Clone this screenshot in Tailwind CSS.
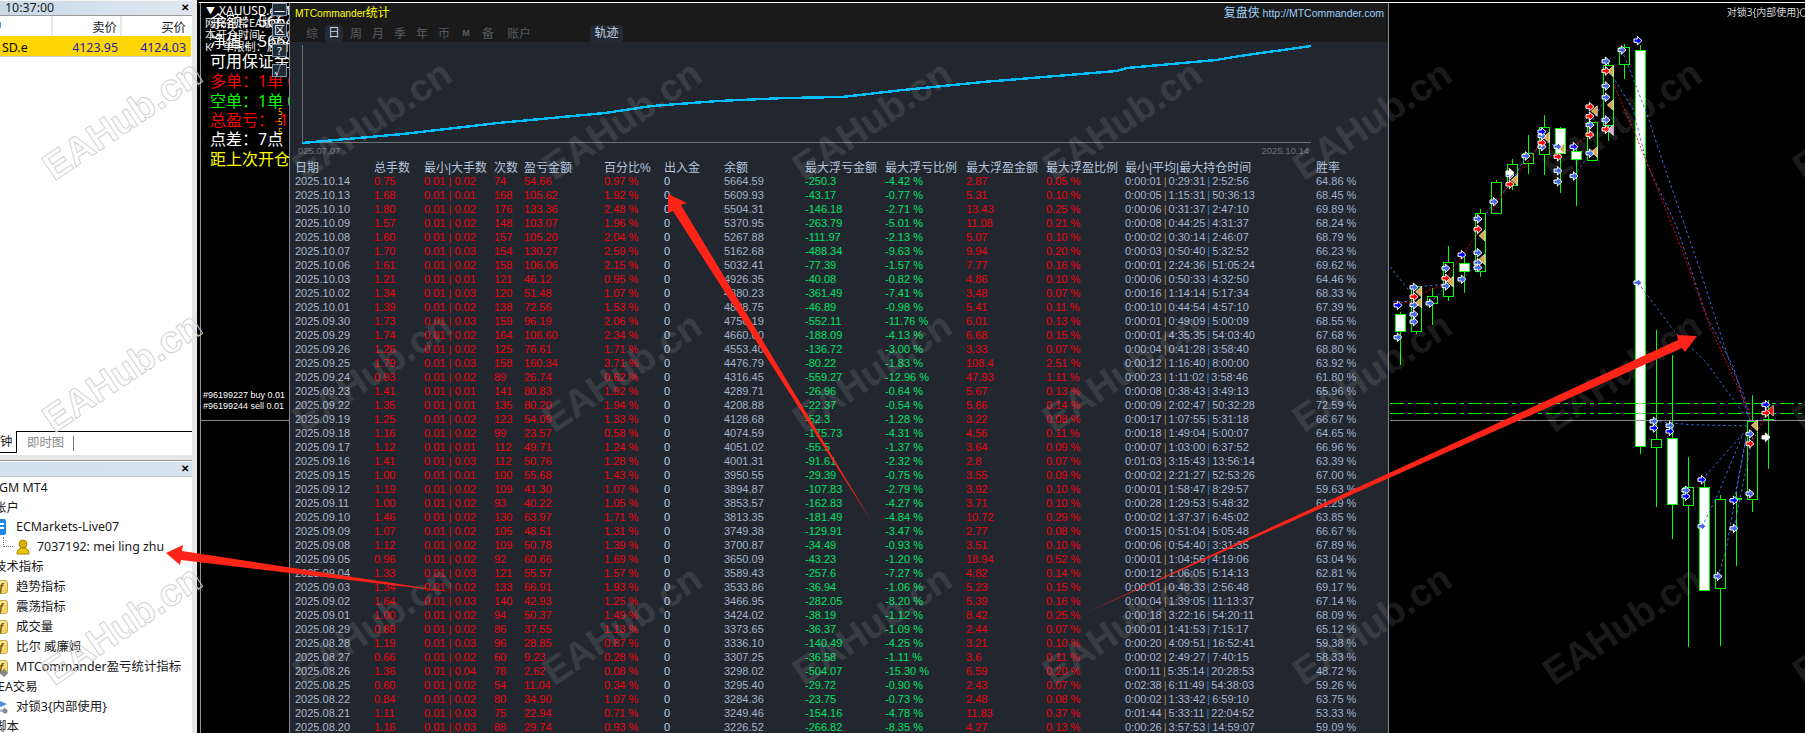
<!DOCTYPE html>
<html lang="en">
<head>
    <meta charset="UTF-8">
    <title>MTCommander</title>
    <script src="https://cdn.jsdelivr.net/npm/@tailwindcss/browser@4"></script>
</head>
<body class="bg-black">
<div id="page" class="relative flex w-[1805px] h-[733px] overflow-hidden bg-black text-[12.4px] [font-family:'Noto_Sans','Noto_Sans_CJK_SC',sans-serif]">

    <!-- left: market watch + navigator -->
    <div class="flex flex-col w-[192px] h-full bg-white text-[#1a1a1a] shrink-0">
        <div class="flex items-center justify-between h-[15px] pl-[5px] pr-[2px] bg-[#f4f4f4]">
            <div class="flex-1 h-[14px] -ml-[5px] pl-[5px] -mr-[14px] pr-[14px] bg-gradient-to-r from-[#c9d9e8] to-[#dfe8f0] leading-[14px]">10:37:00</div>
            <span class="relative font-bold text-[10px] leading-none text-black [font-family:'Liberation_Sans',sans-serif] pr-[1px]">✕</span>
        </div>
        <div class="flex h-[21px] border-t border-[#9a9a9a] leading-[24px]">
            <div class="relative w-[53px] border-r-2 border-[#e8e8e8]"><span class="absolute left-0 top-[6px] w-[1px] h-[6px] bg-[#3da5e8]"></span></div>
            <div class="w-[69px] border-r-2 border-[#e8e8e8] text-right pr-[3px]">卖价</div>
            <div class="w-[69px] text-right pr-[5px]">买价</div>
        </div>
        <div class="flex h-[21px] w-[191px] bg-[#ffd600] leading-[23px] border-b border-[#cfcfcf]">
            <div class="w-[53px] pl-[2px] text-black">SD.e</div>
            <div class="w-[69px] text-right pr-[4px] text-[#2222b8]">4123.95</div>
            <div class="w-[69px] text-right pr-[5px] text-[#2222b8]">4124.03</div>
        </div>
        <div class="flex-1"></div>
        <div class="flex h-[24px] border-t border-black">
            <div class="w-[17px] h-[22px] -mt-px bg-white border-r border-b border-black leading-[21px]">钟</div>
            <div class="w-[56px] h-[22px] pl-[10px] text-[#8a8a8a] leading-[21px]">即时图</div>
            <div class="w-px h-[15px] mt-[4px] bg-[#777]"></div>
        </div>
        <div class="h-[5px] bg-[#e6e6e6]"></div>
        <div class="flex items-center justify-between h-[16px] pr-[2px] border-t border-[#9a9a9a]">
            <div class="flex-1 h-[14px] -mr-[14px] bg-gradient-to-r from-[#d3e1ee] to-[#d7e3ee]"></div>
            <span class="relative font-bold text-[10px] leading-none text-black [font-family:'Liberation_Sans',sans-serif] pr-[1px]">✕</span>
        </div>
        <div class="flex-1 overflow-hidden pt-[1px] border-t border-[#c8c8c8] min-h-[257px] max-h-[257px]">
            <div class="h-[20px] leading-[20px] -ml-[1px]">GM MT4</div>
            <div class="h-[20px] leading-[20px] -ml-[6px]">账户</div>
            <div class="flex items-center h-[20px] -mt-[1px]">
                <svg class="w-[14px] h-[16px] -ml-[7px] mr-[9px]" viewBox="0 0 14 16"><rect x="1" y="0" width="12" height="16" rx="2" fill="#1e88e5"/><rect x="3" y="4" width="8" height="2" fill="#fff"/><rect x="3" y="8" width="8" height="2" fill="#fff"/></svg>
                <span>ECMarkets-Live07</span>
            </div>
            <div class="flex items-center h-[20px]">
                <div class="w-[10px] h-[10px] ml-[3px] -mt-[11px] border-l border-b border-dotted border-[#777]"></div>
                <svg class="w-[14px] h-[16px] ml-[3px] mr-[7px]" viewBox="0 0 14 16"><circle cx="7" cy="5" r="4" fill="#d9b200" stroke="#a88600"/><path d="M1 15c0-5 3-6 6-6s6 1 6 6z" fill="#e5c400" stroke="#a88600"/></svg>
                <span>7037192: mei ling zhu</span>
            </div>
            <div class="h-[20px] leading-[20px] -ml-[6px]">技术指标</div>
            <div class="flex items-center h-[20px]"><span class="w-[14px] h-[14px] -ml-[6px] mr-[8px] rounded-[3px] border border-[#c9a94a] bg-gradient-to-br from-[#fff7c2] to-[#f5c93a] text-center text-[10px] leading-[12px] italic font-bold text-[#7a5a00]">f</span><span>趋势指标</span></div>
            <div class="flex items-center h-[20px]"><span class="w-[14px] h-[14px] -ml-[6px] mr-[8px] rounded-[3px] border border-[#c9a94a] bg-gradient-to-br from-[#fff7c2] to-[#f5c93a] text-center text-[10px] leading-[12px] italic font-bold text-[#7a5a00]">f</span><span>震荡指标</span></div>
            <div class="flex items-center h-[20px]"><span class="w-[14px] h-[14px] -ml-[6px] mr-[8px] rounded-[3px] border border-[#c9a94a] bg-gradient-to-br from-[#fff7c2] to-[#f5c93a] text-center text-[10px] leading-[12px] italic font-bold text-[#7a5a00]">f</span><span>成交量</span></div>
            <div class="flex items-center h-[20px]"><span class="w-[14px] h-[14px] -ml-[6px] mr-[8px] rounded-[3px] border border-[#c9a94a] bg-gradient-to-br from-[#fff7c2] to-[#f5c93a] text-center text-[10px] leading-[12px] italic font-bold text-[#7a5a00]">f</span><span>比尔 威廉姆</span></div>
            <div class="flex items-center h-[20px]"><span class="relative w-[14px] h-[14px] -ml-[6px] mr-[8px] rounded-[3px] border border-[#c9a94a] bg-gradient-to-br from-[#fff7c2] to-[#f5c93a] text-center text-[10px] leading-[12px] italic font-bold text-[#7a5a00]">f<span class="absolute right-0 bottom-[-3px] w-[6px] h-[6px] rotate-45 bg-[#888]"></span></span><span>MTCommander盈亏统计指标</span></div>
            <div class="h-[20px] leading-[20px] -ml-[2px]">EA交易</div>
            <div class="flex items-center h-[20px]">
                <svg class="w-[14px] h-[16px] -ml-[6px] mr-[8px]" viewBox="0 0 14 16"><path d="M0 5l6-3 7 3-6 3z" fill="#4a8fd8"/><path d="M3 8c0 3 6 4 8 0v3c-2 3-7 2-8 0z" fill="#8fb8e0"/><circle cx="11" cy="12" r="2.5" fill="#888"/></svg>
                <span>对锁3{内部使用}</span>
            </div>
            <div class="h-[20px] leading-[20px] -ml-[6px]">脚本</div>
        </div>
    </div>
    <div class="w-[5px] h-full bg-[#e6e6e6] shrink-0"></div>

    <!-- right of the gutter -->
    <div class="flex flex-col flex-1 h-full">
        <div class="h-[2px] bg-black"></div>
        <div class="h-px ml-[2px] bg-white"></div>
        <div class="flex flex-1 min-h-0">

            <!-- small chart window with the EA's text panel -->
            <div class="relative w-[92px] h-full overflow-hidden border-l-[3px] border-l-black shrink-0 text-white">
                <div class="absolute left-0 top-0 w-px h-full bg-[#8a949c]"></div>
                <div class="absolute left-[6px] top-[1px] flex items-center gap-[4px] whitespace-nowrap leading-[14px] text-[12px]"><span class="text-[9px]">▼</span><span>XAUUSD.e,M</span></div>
                <div class="absolute left-[5px] top-[14px] whitespace-nowrap text-[11px] leading-[12px] flex flex-col text-[#e8e8e8]">
                    <span>网络正常EA版本</span><span>本开仓时间：20:00</span><span>K　单限制：启用</span>
                </div>
                <div class="absolute left-[10px] top-[8px] flex flex-col whitespace-nowrap text-[16px] leading-[20.2px]">
                    <div>余额：5664.59</div>
                    <div>净值：5664.39</div>
                    <div>可用保证金</div>
                    <div class="text-[#ff0000] -mt-px">多单：1单 0.01</div>
                    <div class="text-[#00ff00]">空单：1单 0.01</div>
                    <div class="text-[#ff0000] -mt-px">总盈亏：-1.50</div>
                    <div class="-mt-px">点差：7点</div>
                    <div class="text-[#ffff00]">距上次开仓</div>
                </div>
                <div class="absolute left-[72px] top-[0px] flex flex-col gap-[7px] text-[11px] leading-[12px] text-center text-white">
                    <div class="w-[15px] h-[13px] bg-[#1f2c3a] border border-[#8595a5]">—</div>
                    <div class="w-[15px] h-[14px] bg-[#1f2c3a] border border-[#8595a5]">区</div>
                    <div class="w-[15px] h-[13px] bg-[#1f2c3a] border border-[#8595a5]">?</div>
                    <div class="w-[15px] h-[13px] bg-[#1f2c3a] border border-[#8595a5]">√</div>
                </div>
                <div class="absolute left-[78px] top-[104px] flex flex-col text-[8px] leading-[10px] text-[#ffc800]"><span>5</span><span>5</span><span>5</span></div>
                <div class="absolute left-[3px] top-[387px] flex flex-col whitespace-nowrap text-[9px] leading-[11px] [font-family:'Liberation_Sans',sans-serif]">
                    <span>#96199227 buy 0.01</span><span>#96199244 sell 0.01</span>
                </div>
                <div class="absolute left-0 top-[417px] w-full h-px bg-[#8a8a8a]"></div>
            </div>

            <!-- stats window -->
            <div class="flex flex-col w-[1100px] h-full border-x border-[#7f8790] bg-[#22272f] shrink-0 [font-family:'Liberation_Sans','Noto_Sans_CJK_SC',sans-serif]">
                <div class="h-[40px] bg-[#1a1a1a]">
                    <div class="flex justify-between items-center h-[19px] pl-[5px] pr-[4px] pt-[1px]">
                        <span class="text-[#ffff00] text-[12px]"><span class="text-[10.2px]">MTCommander</span>统计</span>
                        <span class="text-[#9ed0fa] text-[10.5px]"><span class="text-[12px]">复盘侠</span> http://MTCommander.com</span>
                    </div>
                    <div class="flex items-center h-[20px] pt-[3px] pl-[11px] text-[12px] text-[#555b62]">
                        <span class="w-[22px] text-center">综</span>
                        <span class="w-[18px] h-[17px] mx-[2px] leading-[17px] rounded-[3px] bg-[#232a33] text-center text-[#c3d2e2]">日</span>
                        <span class="w-[22px] text-center">周</span>
                        <span class="w-[22px] text-center">月</span>
                        <span class="w-[22px] text-center">季</span>
                        <span class="w-[22px] text-center">年</span>
                        <span class="w-[22px] text-center">币</span>
                        <span class="w-[22px] text-center text-[9px] font-bold">M</span>
                        <span class="w-[22px] text-center">备</span>
                        <span class="w-[40px] text-center">账户</span>
                        <span class="w-[33px] h-[17px] ml-[51px] leading-[17px] rounded-[3px] bg-[#232a33] text-center text-[#c3d2e2]">轨迹</span>
                    </div>
                </div>
                <svg class="block w-[1098px] h-[118px] shrink-0" viewBox="290 43 1098 118">
                    <path d="M302.5 46V143.5H1311" fill="none" stroke="#6f7274"/>
                    <polyline fill="none" stroke="#00bfff" stroke-width="2.4" shape-rendering="crispEdges" points="302,144 403,135 498,124 605,114 652,107 718,102 785,99 842,98 903,91 983,83 1117,72 1127,69 1216,61 1240,57 1311,47"/>
                    <text x="298" y="155" font-size="9.5" fill="#6c7278">025.07.07</text>
                    <text x="1309" y="155" text-anchor="end" font-size="9.5" fill="#6c7278">2025.10.14</text>
                </svg>
                <div id="stats" class="pl-[5px] text-[11px] leading-[14px] whitespace-nowrap">
                    <div class="grid h-[14px] pt-px grid-cols-[79px_50px_70px_30px_80px_60px_60px_81px_80px_81px_80px_79px_191px_1fr] text-[12px] text-[#b3c4dc] leading-[14px]">
                        <div>日期</div><div>总手数</div><div>最小|大手数</div><div>次数</div><div>盈亏金额</div><div>百分比%</div><div>出入金</div><div>余额</div><div>最大浮亏金额</div><div>最大浮亏比例</div><div>最大浮盈金额</div><div>最大浮盈比例</div><div>最小|平均|最大持仓时间</div><div>胜率</div>
                    </div>
                    <div id="rows"></div>
                </div>
            </div>

            <!-- main chart, candle positions are the content so drawn as svg -->
            <div class="relative flex-1 h-full overflow-hidden">
                <svg id="chart" class="block ml-px w-[415px] h-[730px]" viewBox="0 9 1245 2190"></svg>
                <div class="absolute right-0 top-[2px] flex items-center text-[10px] text-[#d6d6d6] whitespace-nowrap leading-[14px]">对锁3{内部使用}<span class="w-[7px] h-[9px] -mr-[2px] rounded-full border border-[#d6d6d6]"></span></div>
            </div>
        </div>
    </div>

    <!-- watermark -->
    <div id="marks" class="absolute inset-0 overflow-hidden pointer-events-none"></div>

    <!-- red hand drawn arrows -->
    <svg class="absolute left-0 top-0 w-[1805px] h-[733px] pointer-events-none" viewBox="0 0 1805 733">
        <polygon fill="#ff2418" points="451,592 181,560 180,565 166,553 183,545 182,551"/>
        <polygon fill="#ff2418" points="872,522 681,205 687,203 668,194 668,213 673,211"/>
        <polygon fill="#ff2418" points="1085,613 1678,340 1677,335 1697,336 1685,352 1682,348"/>
    </svg>
</div>

<script>
    // date lots max count profit pct balance loss lossPct float floatPct tmin tavg tmax win
    const DATA = `10.14 0.75 0.02 74 54.66 0.97 5664.59 -250.3 -4.42 2.87 0.05 0:00:01 0:29:31 2:52:56 64.86
10.13 1.68 0.01 168 105.62 1.92 5609.93 -43.17 -0.77 5.31 0.10 0:00:05 1:15:31 50:36:13 68.45
10.10 1.80 0.02 176 133.36 2.48 5504.31 -146.18 -2.71 13.43 0.25 0:00:06 0:31:37 2:47:10 69.89
10.09 1.57 0.02 148 103.07 1.96 5370.95 -263.79 -5.01 11.08 0.21 0:00:08 0:44:25 4:31:37 68.24
10.08 1.60 0.02 157 105.20 2.04 5267.88 -111.97 -2.13 5.07 0.10 0:00:02 0:30:14 2:46:07 68.79
10.07 1.70 0.03 154 130.27 2.59 5162.68 -488.34 -9.63 9.94 0.20 0:00:03 0:50:40 5:32:52 66.23
10.06 1.61 0.02 158 106.06 2.15 5032.41 -77.39 -1.57 7.77 0.16 0:00:01 2:24:36 51:05:24 69.62
10.03 1.21 0.01 121 46.12 0.95 4926.35 -40.08 -0.82 4.86 0.10 0:00:06 0:50:33 4:32:50 64.46
10.02 1.34 0.03 120 51.48 1.07 4880.23 -361.49 -7.41 3.48 0.07 0:00:16 1:14:14 5:17:34 68.33
10.01 1.39 0.02 138 72.56 1.53 4828.75 -46.89 -0.98 5.41 0.11 0:00:10 0:44:54 4:57:10 67.39
09.30 1.73 0.03 159 96.19 2.06 4756.19 -552.11 -11.76 6.01 0.13 0:00:01 0:49:09 5:00:09 68.55
09.29 1.74 0.02 164 106.60 2.34 4660.00 -188.09 -4.13 6.68 0.15 0:00:01 4:35:35 54:03:40 67.68
09.26 1.26 0.02 125 76.61 1.71 4553.40 -136.72 -3.00 3.33 0.07 0:00:04 0:41:28 3:58:40 68.80
09.25 1.79 0.03 158 160.34 3.71 4476.79 -80.22 -1.83 108.4 2.51 0:00:12 1:16:40 8:00:00 63.92
09.24 0.93 0.02 89 26.74 0.62 4316.45 -559.27 -12.96 47.93 1.11 0:00:23 1:11:02 3:58:46 61.80
09.23 1.41 0.01 141 80.83 1.92 4289.71 -26.96 -0.64 5.67 0.13 0:00:08 0:38:43 3:49:13 65.96
09.22 1.35 0.01 135 80.20 1.94 4208.88 -22.37 -0.54 5.66 0.14 0:00:09 2:02:47 50:32:28 72.59
09.19 1.25 0.02 123 54.09 1.33 4128.68 -52.3 -1.28 3.22 0.08 0:00:17 1:07:55 5:31:18 66.67
09.18 1.16 0.02 99 23.57 0.58 4074.59 -175.73 -4.31 4.56 0.11 0:00:18 1:49:04 5:00:07 64.65
09.17 1.12 0.01 112 49.71 1.24 4051.02 -55.5 -1.37 3.64 0.09 0:00:07 1:03:00 6:37:52 66.96
09.16 1.41 0.03 112 50.76 1.28 4001.31 -91.61 -2.32 2.8 0.07 0:01:03 3:15:43 13:56:14 63.39
09.15 1.00 0.01 100 55.68 1.43 3950.55 -29.39 -0.75 3.55 0.09 0:00:02 2:21:27 52:53:26 67.00
09.12 1.19 0.02 109 41.30 1.07 3894.87 -107.83 -2.79 3.92 0.10 0:00:01 1:58:47 8:29:57 59.63
09.11 1.00 0.02 93 40.22 1.05 3853.57 -162.83 -4.27 3.71 0.10 0:00:28 1:29:53 5:48:32 61.29
09.10 1.46 0.02 130 63.97 1.71 3813.35 -181.49 -4.84 10.72 0.29 0:00:02 1:37:37 6:45:02 63.85
09.09 1.07 0.02 105 48.51 1.31 3749.38 -129.91 -3.47 2.77 0.08 0:00:15 0:51:04 5:05:48 66.67
09.08 1.12 0.02 109 50.78 1.39 3700.87 -34.49 -0.93 3.51 0.10 0:00:06 0:54:40 3:31:35 67.89
09.05 0.96 0.02 92 60.66 1.69 3650.09 -43.23 -1.20 18.94 0.52 0:00:01 1:04:56 4:19:06 63.04
09.04 1.33 0.03 121 55.57 1.57 3589.43 -257.6 -7.27 4.82 0.14 0:00:12 1:06:05 5:14:13 62.81
09.03 1.34 0.02 133 66.91 1.93 3533.86 -36.94 -1.06 5.23 0.15 0:00:01 0:48:33 2:56:48 69.17
09.02 1.64 0.03 140 42.93 1.25 3466.95 -282.05 -8.20 5.39 0.16 0:00:04 1:39:05 11:13:37 67.14
09.01 1.00 0.02 94 50.37 1.49 3424.02 -38.19 -1.12 8.42 0.25 0:00:18 3:22:16 54:20:11 68.09
08.29 0.88 0.02 86 37.55 1.13 3373.65 -36.37 -1.09 2.44 0.07 0:00:01 1:41:53 7:15:17 65.12
08.28 1.19 0.03 96 28.85 0.87 3336.10 -140.49 -4.25 3.21 0.10 0:00:20 4:09:51 16:52:41 59.38
08.27 0.66 0.02 60 9.23 0.28 3307.25 -36.58 -1.11 3.6 0.11 0:00:02 2:49:27 7:40:15 58.33
08.26 1.36 0.04 78 2.62 0.08 3298.02 -504.07 -15.30 6.59 0.20 0:00:11 5:35:14 20:28:53 48.72
08.25 0.60 0.02 54 11.04 0.34 3295.40 -29.72 -0.90 2.43 0.07 0:02:38 6:11:49 54:38:03 59.26
08.22 0.84 0.02 80 34.90 1.07 3284.36 -23.75 -0.73 2.48 0.08 0:00:02 1:33:42 6:59:10 63.75
08.21 1.11 0.03 75 22.94 0.71 3249.46 -154.16 -4.78 11.83 0.37 0:01:44 5:33:11 22:04:52 53.33
08.20 1.16 0.03 88 29.74 0.93 3226.52 -266.82 -8.35 4.27 0.13 0:00:26 3:57:53 14:59:07 59.09`;

    const RED = 'text-[#f0000c]';
    const GREEN = 'text-[#00e068]';

    document.getElementById('rows').innerHTML = DATA.split('\n').map(line => {
        const d = line.split(' ');
        return `<div class="grid h-[14px] grid-cols-[79px_50px_70px_30px_80px_60px_60px_81px_80px_81px_80px_79px_191px_1fr]">
            <div class="text-[#a9b8cc]">2025.${d[0]}</div>
            <div class="${RED}">${d[1]}</div>
            <div class="${RED}">0.01 | ${d[2]}</div>
            <div class="${RED}">${d[3]}</div>
            <div class="${RED}">${d[4]}</div>
            <div class="${RED}">${d[5]} %</div>
            <div class="text-[#b8d4f0]">0</div>
            <div class="text-[#a3b3c9]">${d[6]}</div>
            <div class="${GREEN}">${d[7]}</div>
            <div class="${GREEN}">${d[8]} %</div>
            <div class="${RED}">${d[9]}</div>
            <div class="${RED}">${d[10]} %</div>
            <div class="text-[#a5b5d0]">${d[11]}<span class="mx-[2px] text-[#b5853a]">|</span>${d[12]}<span class="mx-[2px] text-[#3b82d0]">|</span>${d[13]}</div>
            <div class="text-[#9fb2d0]">${d[14]} %</div>
        </div>`;
    }).join('');

    // watermark grid
    let marks = '';
    for (const cy of [120, 372, 625]) {
        for (const cx of [122, 372, 622, 872, 1122, 1372, 1622, 1872]) {
            const cls = cx === 122
                ? 'text-transparent [-webkit-text-stroke:1px_#d2d2d2]'
                : 'text-white/10';
            marks += `<div class="absolute -translate-x-1/2 -translate-y-1/2 rotate-[-34deg] whitespace-nowrap font-bold text-[38px] leading-none [font-family:'Liberation_Sans',sans-serif] ${cls}" style="left:${cx}px;top:${cy}px">EAHub.cn</div>`;
        }
    }
    document.getElementById('marks').innerHTML = marks;

    // candles: centre x, body top, body bottom, wick top, wick bottom, filled (3x coordinates of the chart)
    const CANDLES = [
        [32, 943, 995, 935, 1095, 1], [80, 860, 995, 855, 1002, 0], [127, 889, 911, 865, 975, 0],
        [175, 788, 890, 738, 902, 0], [223, 790, 815, 765, 880, 1], [271, 640, 815, 628, 832, 0],
        [319, 547, 640, 540, 640, 0], [367, 493, 555, 478, 570, 0], [415, 460, 490, 405, 522, 0],
        [463, 382, 463, 345, 525, 0], [511, 385, 460, 380, 578, 1], [559, 455, 478, 440, 617, 1],
        [607, 367, 481, 367, 481, 0], [655, 196, 377, 185, 423, 0], [703, 142, 193, 132, 237, 0],
        [751, 152, 1339, 135, 1361, 1], [799, 1318, 1342, 990, 1522, 0], [847, 1315, 1514, 1065, 1616, 1],
        [895, 1462, 1517, 1371, 1941, 0], [943, 1462, 1772, 1440, 1772, 1], [991, 1498, 1766, 1486, 1938, 0],
        [1039, 1494, 1499, 1477, 1697, 0], [1087, 1264, 1498, 1184, 1535, 0], [1135, 1258, 1262, 1201, 1407, 0]
    ];
    const ROYAL = [[72,862],[72,915],[72,943],[72,965],[24,1012],[120,910],[168,805],[168,858],[216,838],[264,657],[264,758],[264,788],[264,803],[312,605],[360,525],[408,468],[456,408],[456,440],[504,440],[504,512],[504,545],[552,528],[600,375],[600,460],[648,184],[648,258],[648,292],[648,360],[696,150],[744,848],[792,1264],[840,1277],[888,1471],[936,1579],[984,1729],[1032,1585],[1080,1302],[1080,1481]];
    const BLUE = [[24,916],[216,764],[456,395],[552,440],[744,122],[792,1284],[840,1294],[888,1489],[936,1439],[1032,1501],[1128,1214]];
    const REDS = [[72,890],[168,835],[264,688],[360,553],[456,428],[504,470],[600,320],[600,349],[600,404],[648,213],[648,388],[1080,1331],[1128,1239]];
    const TRI = [[85,875],[85,908],[180,845],[275,707],[275,778],[372,540],[468,412],[514,445],[612,333],[612,456],[660,214],[660,315],[1092,1276]];
    const DASH_BLUE = [
        '0,800 60,875', '72,862 168,852', '10,905 70,905', '120,910 168,858', '216,838 264,790', '290,640 312,605 360,555 408,468 456,440',
        '456,420 504,440', '552,528 600,460', '600,375 648,292', '696,150 770,340 830,520 930,810 1020,1090 1060,1180 1080,1260',
        '650,200 730,330 770,490 860,680 950,950 1030,1100 1075,1250', '744,848 850,990 950,1089 1060,1240',
        '792,1264 900,1274 1075,1278', '936,1439 1060,1300', '936,1580 985,1480 1060,1300', '984,1730 1010,1640 1070,1300', '1032,1500 1070,1310', '1032,1585 1088,1310'
    ];
    const DASH_RED = ['10,910 70,906', '72,890 168,850', '168,835 264,700', '300,640 360,550 410,490 450,430', '456,428 504,470 600,404', '670,250 735,400 800,560 880,760 960,980 1010,1089 1085,1250', '1085,1330 1128,1239'];

    let svg = `<rect x="0" y="9" width="1245" height="2190" fill="#000"/>
        <defs>
            <path id="arrow" d="M-12-5h10v-8l14 13-14 13v-8h-10z" stroke="#fff" stroke-width="3"/>
            <path id="tri" d="M10-16v32l-18-16z" stroke="#fff" stroke-width="2"/>
        </defs>`;
    for (const [x, t, b, wt, wb, fill] of CANDLES) {
        svg += `<path d="M${x} ${wt}V${wb}" stroke="#00ff00" stroke-width="3" shape-rendering="crispEdges"/>
            <rect x="${x - 15}" y="${t}" width="30" height="${b - t}" fill="${fill ? '#fff' : '#000'}" stroke="#00ff00" stroke-width="3" shape-rendering="crispEdges"/>`;
    }
    svg += `<path d="M0 1210H1245M0 1241H1245" stroke="#00ee00" stroke-width="3" stroke-dasharray="42 12 12 12" shape-rendering="crispEdges"/>
        <path d="M0 1261H1245" stroke="#8a8e94" stroke-width="3" shape-rendering="crispEdges"/>`;
    DASH_BLUE.forEach(p => svg += `<polyline points="${p}" fill="none" stroke="#4169e1" stroke-width="3" stroke-dasharray="8 8"/>`);
    DASH_RED.forEach(p => svg += `<polyline points="${p}" fill="none" stroke="#ff0000" stroke-width="3" stroke-dasharray="6 6"/>`);
    TRI.forEach(([x, y]) => svg += `<use href="#tri" x="${x}" y="${y}" fill="#d9a441"/>`);
    svg += `<use href="#tri" x="660" y="390" fill="#dd99dd"/><use href="#tri" x="1140" y="1232" fill="#ff0000"/>`;
    ROYAL.forEach(([x, y]) => svg += `<use href="#arrow" x="${x}" y="${y}" fill="#4169e1"/>`);
    BLUE.forEach(([x, y]) => svg += `<use href="#arrow" x="${x}" y="${y}" fill="#0000ff"/>`);
    REDS.forEach(([x, y]) => svg += `<use href="#arrow" x="${x}" y="${y}" fill="#ff0000"/>`);
    svg += `<use href="#arrow" x="1128" y="1312" fill="#fff"/><use href="#arrow" x="360" y="518" fill="#fff"/>`;
    document.getElementById('chart').innerHTML = svg;
</script>
</body>
</html>
